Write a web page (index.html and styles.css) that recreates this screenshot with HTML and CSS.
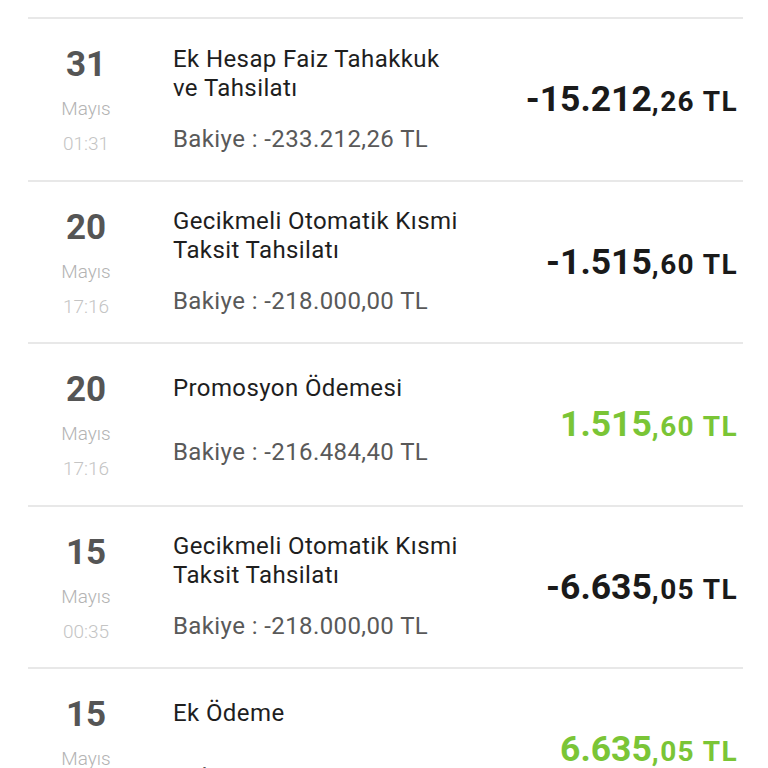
FILE: index.html
```html
<!DOCTYPE html>
<html lang="tr">
<head>
<meta charset="utf-8">
<link rel="stylesheet" href="styles.css">
</head>
<body>
<div class="list">
  <div class="row">
    <div class="date"><div class="day">31</div><div class="month">Mayıs</div><div class="time">01:31</div></div>
    <div class="info"><div class="title">Ek Hesap Faiz Tahakkuk<br>ve Tahsilatı</div><div class="balance">Bakiye : -233.212,26 TL</div></div>
    <div class="amount"><span class="int">-15.212</span><span class="dec">,26 TL</span></div>
  </div>
  <div class="row">
    <div class="date"><div class="day">20</div><div class="month">Mayıs</div><div class="time">17:16</div></div>
    <div class="info"><div class="title">Gecikmeli Otomatik Kısmi<br>Taksit Tahsilatı</div><div class="balance">Bakiye : -218.000,00 TL</div></div>
    <div class="amount"><span class="int">-1.515</span><span class="dec">,60 TL</span></div>
  </div>
  <div class="row">
    <div class="date"><div class="day">20</div><div class="month">Mayıs</div><div class="time">17:16</div></div>
    <div class="info"><div class="title one">Promosyon Ödemesi</div><div class="balance">Bakiye : -216.484,40 TL</div></div>
    <div class="amount pos"><span class="int">1.515</span><span class="dec">,60 TL</span></div>
  </div>
  <div class="row">
    <div class="date"><div class="day">15</div><div class="month">Mayıs</div><div class="time">00:35</div></div>
    <div class="info"><div class="title">Gecikmeli Otomatik Kısmi<br>Taksit Tahsilatı</div><div class="balance">Bakiye : -218.000,00 TL</div></div>
    <div class="amount"><span class="int">-6.635</span><span class="dec">,05 TL</span></div>
  </div>
  <div class="row">
    <div class="date"><div class="day">15</div><div class="month">Mayıs</div><div class="time">00:35</div></div>
    <div class="info"><div class="title one">Ek Ödeme</div><div class="balance">Bakiye : -211.364,95 TL</div></div>
    <div class="amount pos"><span class="int">6.635</span><span class="dec">,05 TL</span></div>
  </div>
</div>
</body>
</html>
```

FILE: styles.css
```css
html, body {
  margin: 0;
  padding: 0;
  background: #ffffff;
  overflow: hidden;
}
body {
  font-family: Roboto, "Noto Sans", sans-serif;
  width: 768px;
  height: 768px;
}
.list {
  padding-top: 17px;
  margin: 0 25px 0 28px;
}
.row {
  box-sizing: border-box;
  height: 162.5px;
  border-top: 2px solid #e8e8e8;
  display: flex;
  align-items: center;
  padding-right: 5px;
}
.date {
  width: 116px;
  flex: none;
  display: flex;
  flex-direction: column;
  align-items: center;
  margin-top: 6px;
}
.day {
  font-size: 35px;
  font-weight: 700;
  color: #555555;
  line-height: 44px;
}
.month {
  margin-top: 4px;
  font-size: 19px;
  font-weight: 300;
  color: #b3b3b3;
  line-height: 36px;
}
.time {
  font-size: 19px;
  font-weight: 300;
  color: #c4c4c4;
  line-height: 34px;
}
.info {
  margin-left: 29px;
  flex: 1;
  display: flex;
  flex-direction: column;
}
.title {
  font-size: 24px;
  letter-spacing: 0.4px;
  color: #1e1e1e;
  line-height: 29px;
  min-height: 42px;
}
.title.one {
  margin-top: -7px;
}
.balance {
  margin-top: 22px;
  font-size: 24px;
  letter-spacing: 0.4px;
  color: #595959;
  line-height: 29px;
}
.amount {
  flex: none;
  font-weight: 700;
  color: #1a1a1a;
  white-space: nowrap;
}
.amount.pos {
  color: #7ac536;
}
.int {
  font-size: 35.5px;
}
.dec {
  font-size: 28px;
  letter-spacing: 1.4px;
}
```
